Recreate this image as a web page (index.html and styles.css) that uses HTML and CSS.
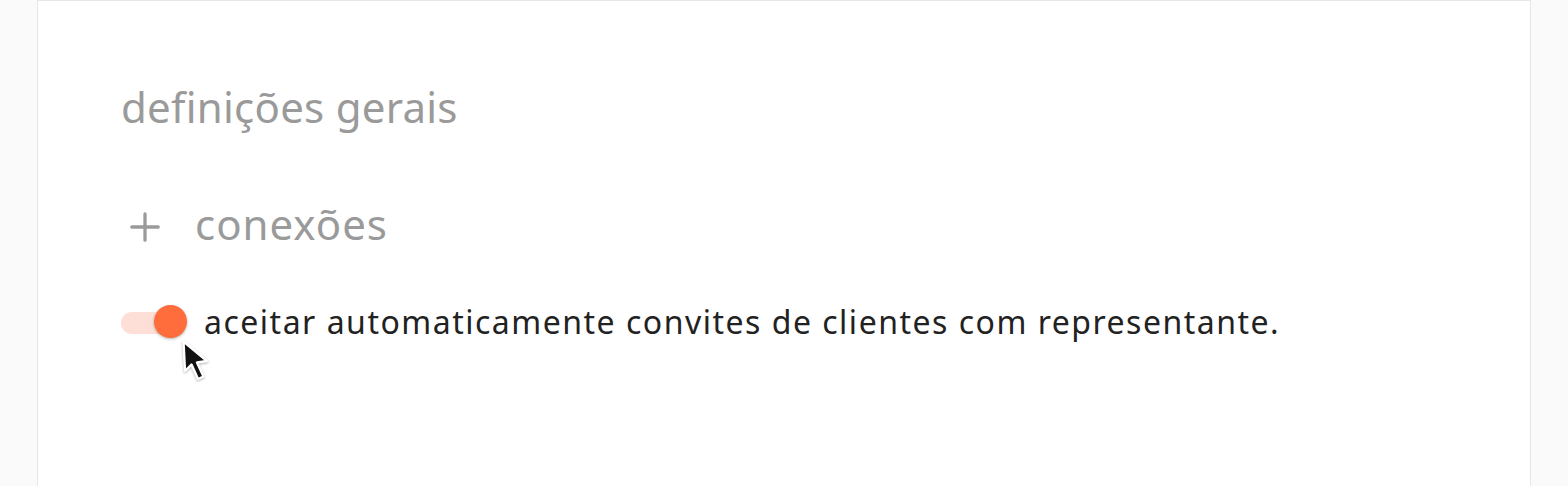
FILE: index.html
```html
<!DOCTYPE html>
<html lang="pt">
<head>
<meta charset="utf-8">
<link rel="stylesheet" href="styles.css">
</head>
<body>
<main class="card">
  <h1 class="title">definições gerais</h1>
  <section class="section">
    <div class="section-head">
      <svg class="plus" viewBox="0 0 30 30" width="30" height="30" aria-hidden="true">
        <path d="M15 1.8 V28.2 M1.8 15 H28.2" stroke="#9a9a9a" stroke-width="3.3" stroke-linecap="round" fill="none"/>
      </svg>
      <h2 class="section-title">conexões</h2>
    </div>
    <label class="option">
      <span class="toggle">
        <span class="track"></span>
        <span class="knob"></span>
        <svg class="cursor" viewBox="0 0 32 46" width="32" height="46" aria-hidden="true">
          <path d="M2.5 2.5 L4 32 L10.5 25.5 L17 40 L22.5 37.5 L16 23.5 L26 22 Z" fill="#111" stroke="#fff" stroke-width="2.4" stroke-linejoin="round"/>
        </svg>
      </span>
      <span class="option-text">aceitar automaticamente convites de clientes com representante.</span>
    </label>
  </section>
</main>
</body>
</html>
```
FILE: styles.css
```css
* { box-sizing: border-box; }
html, body { margin: 0; padding: 0; }
body {
  background: #fafafa;
  font-family: "Noto Sans", "Open Sans", sans-serif;
  width: 1568px;
  height: 486px;
  overflow: hidden;
}
.card {
  margin-left: 37px;
  width: 1494px;
  height: 486px;
  background: #fff;
  border: 1px solid #e6e6e6;
  border-bottom: none;
  padding: 78px 83px 0 83px;
}
.title {
  margin: 0;
  font-weight: 400;
  font-size: 42px;
  line-height: 56px;
  color: #9a9a9a;
  letter-spacing: 0.25px;
}
.section { margin-top: 61px; }
.section-head {
  display: flex;
  align-items: center;
  gap: 35px;
  padding-left: 9px;
}
.plus { flex: none; margin-top: 6px; }
.section-title {
  margin: 0;
  font-weight: 400;
  font-size: 42px;
  line-height: 56px;
  color: #9a9a9a;
  letter-spacing: 1px;
}
.option {
  display: flex;
  align-items: center;
  gap: 17px;
  margin-top: 50px;
}
.toggle {
  position: relative;
  width: 66px;
  height: 36px;
  flex: none;
}
.track {
  position: absolute;
  left: 0;
  top: 8px;
  width: 58px;
  height: 22px;
  border-radius: 11px;
  background: #fddfd7;
}
.knob {
  position: absolute;
  left: 33px;
  top: 1px;
  width: 33px;
  height: 33px;
  border-radius: 50%;
  background: #ff6d3c;
  box-shadow: 0 1px 3px rgba(0,0,0,0.3);
}
.cursor {
  position: absolute;
  left: 60px;
  top: 35px;
  filter: drop-shadow(0 1px 1px rgba(0,0,0,0.3));
}
.option-text {
  font-size: 32px;
  line-height: 40px;
  letter-spacing: 1.5px;
  color: #222;
}
```
